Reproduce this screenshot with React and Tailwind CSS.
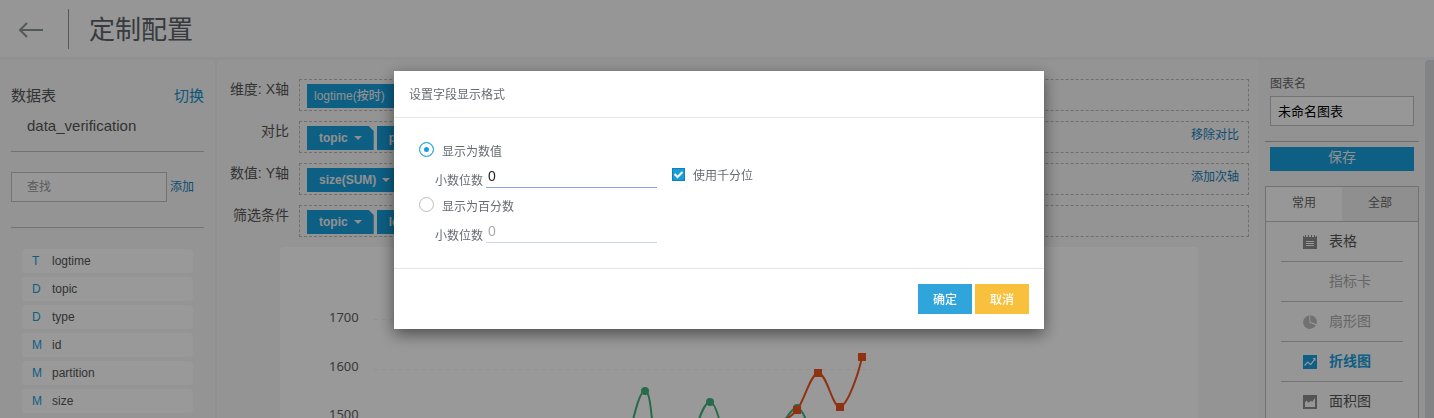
import React from "react";

const fields = [
  ["T", "logtime"],
  ["D", "topic"],
  ["D", "type"],
  ["M", "id"],
  ["M", "partition"],
  ["M", "size"],
];

const shelves = [
  { label: "维度: X轴", chips: [{ text: "logtime(按时)", plain: true }] },
  { label: "对比", chips: [{ text: "topic" }, { text: "partition" }], action: "移除对比" },
  { label: "数值: Y轴", chips: [{ text: "size(SUM)" }], action: "添加次轴" },
  { label: "筛选条件", chips: [{ text: "topic" }, { text: "logtime" }] },
];

function TableIcon() {
  return (
    <svg width="14" height="14" viewBox="0 0 14 14" aria-hidden="true">
      <path fill="#8c8c8c" d="M0 1h1v1h1V0h1v2h2V0h1v2h2V0h1v2h2V0h1v2h1V1h1v13H0z" />
      <path stroke="#fafafa" d="M3 6.500h8M3 8.500h8M3 10.500h8" />
    </svg>
  );
}

function PieIcon() {
  return (
    <svg width="14" height="14" viewBox="0 0 14 14" aria-hidden="true">
      <path fill="#bcbcbc" d="M6.300 .5V7.700l6.500 2.600A6.700 6.700 0 1 1 6.300 .5z" />
      <path fill="#bcbcbc" d="M7.300 .2A6.700 6.700 0 0 1 13.600 8.900L7.300 6.900z" />
    </svg>
  );
}

function LineIcon() {
  return (
    <svg width="14" height="14" viewBox="0 0 14 14" aria-hidden="true">
      <path fill="#169edb" d="M0 0h14v14H0z" />
      <path fill="none" stroke="#fafafa" strokeWidth="1.2" d="M1.500 10.500 4.800 7l2.800 2.600 4.200-5.400" />
      <path fill="#fafafa" d="M9.500 3h3v3.200z" />
    </svg>
  );
}

function AreaIcon() {
  return (
    <svg width="14" height="14" viewBox="0 0 14 14" aria-hidden="true">
      <path fill="#8c8c8c" d="M0 0h14v14H0z" />
      <path fill="#fafafa" d="M2 12V7.500L3.500 5.500l2 2.200L8 5.500l1 1.500L12 3v9z" />
    </svg>
  );
}

const chartTypes = [
  { name: "表格", icon: <TableIcon />, tone: "text-[#555]" },
  { name: "指标卡", icon: null, tone: "text-[#aaa]" },
  { name: "扇形图", icon: <PieIcon />, tone: "text-[#aaa]" },
  { name: "折线图", icon: <LineIcon />, tone: "font-bold text-[#169edb]" },
  { name: "面积图", icon: <AreaIcon />, tone: "text-[#555]" },
];

function Chip({ text, plain }) {
  return (
    <button
      type="button"
      className={
        "flex h-6 items-center bg-[#169edb] text-xs text-[#f0f0f0] " +
        (plain
          ? "gap-3 px-[7px] font-medium"
          : "gap-1.5 px-3 font-bold [clip-path:polygon(0_0,calc(100%-5px)_0,100%_5px,100%_100%,0_100%)]")
      }
    >
      {text}
      <svg width="8" height="4" viewBox="0 0 8 4" aria-hidden="true">
        <path fill="currentColor" d="M0 0h8L4 4z" />
      </svg>
    </button>
  );
}

function Header() {
  return (
    <header className="flex h-[60px] shrink-0 items-center border-b-3 border-[#eef1f4] bg-[#fafafa] pl-[18px]">
      <a href="#back" aria-label="返回">
        <svg width="26" height="18" viewBox="0 0 26 18" fill="none" stroke="#8b9494" strokeWidth="2" aria-hidden="true">
          <path d="M25 10H2M9 3 2 10l7 7" />
        </svg>
      </a>
      <div className="ml-6 h-10 w-px bg-[#8b9494]" />
      <h1 className="ml-5 pt-0.5 text-[26px] leading-10 text-[#5c6268]">定制配置</h1>
    </header>
  );
}

function FieldPanel() {
  return (
    <aside className="w-[217px] shrink-0 border-r-2 border-[#eef1f4] bg-[#f7f7f7] pr-[11px] pl-[11px] pt-6">
      <div className="flex items-center justify-between text-[15px] leading-6">
        <h2 className="text-[#555]">数据表</h2>
        <a href="#switch" className="text-[#1690cc]">切换</a>
      </div>
      <p className="mt-[5px] border-b border-[#c0c0c0] pb-3 pl-4 text-[15px] leading-[26px] text-[#555]">data_verification</p>
      <div className="mt-5 flex items-center gap-[3px] border-b border-[#c0c0c0] pb-[25px]">
        <input
          aria-label="查找"
          placeholder="查找"
          className="h-[30px] w-[156px] border border-[#c0c0c0] bg-[#fcfcfc] px-[15px] text-xs placeholder:text-[#999]"
        />
        <a href="#add" className="text-xs text-[#1680bb]">添加</a>
      </div>
      <ul className="mx-[11px] mt-[21px] flex flex-col gap-1 text-xs text-[#555]">
        {fields.map(([kind, name]) => (
          <li key={name} className="flex h-6 items-center rounded bg-white pb-px pl-[10px]">
            <span className="w-5 text-[#169edb]">{kind}</span>
            {name}
          </li>
        ))}
      </ul>
    </aside>
  );
}

function Chart() {
  return (
    <div className="mt-2.5 mr-[60px] ml-[63px] overflow-hidden rounded-sm bg-white">
      <svg width="918" height="280" viewBox="280 247 918 280" role="img" aria-label="折线图">
        <g stroke="#f4f4f4" strokeDasharray="4 4">
          <path d="M374 319.500H873M374 369.500H873M374 418.500H873" />
        </g>
        <g fill="#606060" fontSize="13" fontFamily="'Noto Sans', sans-serif">
          <text x="329" y="322">1700</text>
          <text x="329" y="371">1600</text>
          <text x="329" y="419">1500</text>
        </g>
        <g fill="none" stroke="#3fb27f" strokeWidth="2">
          <path d="M628 440C636 407 640 391 645 391S651 410 654 440M692 440C700 414 705 402 710 402S720 420 724 440M775 440C786 416 792 408 797 408S808 422 812 440" />
        </g>
        <g fill="#3fb27f">
          <circle cx="645" cy="391" r="4" />
          <circle cx="710" cy="402" r="4" />
          <circle cx="797" cy="408" r="4" />
        </g>
        <path fill="none" stroke="#f0541e" strokeWidth="2" d="M775 430C784 420 791 417 797 410C805 399 810 375 818 373C827 373 832 407 840 407C848 405 859 372 862 357" />
        <path fill="#f0541e" d="M793 406h8v8h-8zM814 369h8v8h-8zM836 403h8v8h-8zM858 353h8v8h-8z" />
      </svg>
    </div>
  );
}

function Workspace() {
  return (
    <main className="min-w-0 flex-1 bg-[#f7f7f7] pt-[19px]">
      <div className="flex flex-col gap-2.5 pr-[9px]">
        {shelves.map((shelf) => (
          <section key={shelf.label} className="flex gap-2.5">
            <h3 className="w-[72px] shrink-0 text-right text-sm leading-5 text-[#555]">{shelf.label}</h3>
            <div className="flex h-8 flex-1 items-center gap-[3px] border border-dashed border-[#bbb] px-[7px] pt-0.5">
              {shelf.chips.map((chip) => (
                <Chip key={chip.text} {...chip} />
              ))}
              {shelf.action && (
                <a href="#shelf" className="mr-0.5 mb-1.5 ml-auto text-xs text-[#1680bb]">{shelf.action}</a>
              )}
            </div>
          </section>
        ))}
      </div>
      <Chart />
    </main>
  );
}

function ChartPanel() {
  return (
    <aside className="w-[167px] shrink-0 bg-[#f3f3f3] pt-4 pr-1.5 pl-[7px] text-xs">
      <div className="px-[5px]">
        <label htmlFor="chart-name" className="block leading-4 text-[#666]">图表名</label>
        <input
          id="chart-name"
          defaultValue="未命名图表"
          className="mt-1 h-[30px] w-full border border-[#c0c0c0] bg-[#fcfcfc] px-[7px] pb-0.5 text-[13px] text-black"
        />
      </div>
      <hr className="mt-[15px] border-[#b5b5b5]" />
      <div className="px-[5px]">
        <button type="button" className="mt-[5px] h-6 w-full bg-[#169edb] pb-1 text-sm leading-5 text-[#f0f0f0]">保存</button>
      </div>
      <div className="mt-[15px] border border-[#bfbfbf] bg-[#fafafa]">
        <div className="flex h-[35px] border-b border-[#bfbfbf] text-[#666]">
          <button type="button" className="flex-1 bg-[#fcfcfc] pb-0.5">常用</button>
          <button type="button" className="flex-1 bg-[#efefef] pb-0.5">全部</button>
        </div>
        <ul className="px-[15px] text-sm">
          {chartTypes.map((type) => (
            <li key={type.name} className="border-b border-[#bfbfbf]">
              <button type="button" className={"flex h-[39px] w-full items-center pb-0.5 pl-[22px] " + type.tone}>
                <span className="mt-0.5 w-[26px]">{type.icon}</span>
                {type.name}
              </button>
            </li>
          ))}
        </ul>
      </div>
    </aside>
  );
}

function FormatOption({ id, label, checked, disabled, children }) {
  return (
    <div className="h-[55px]">
      <div className="flex h-[23px] items-center gap-2">
        <input
          type="radio"
          name="format"
          id={id}
          defaultChecked={checked}
          className="mb-1 size-[15px] appearance-none rounded-full border border-[#bbb] bg-white checked:border-[#2ba6de] checked:bg-[#169edb] checked:shadow-[inset_0_0_0_4px_white]"
        />
        <label htmlFor={id}>{label}</label>
      </div>
      <div className="flex h-[26px] items-start pl-4">
        <label htmlFor={id + "-digits"} className="pt-[9px] leading-[18px]">小数位数</label>
        <input
          id={id + "-digits"}
          defaultValue="0"
          disabled={disabled}
          className="ml-[3px] h-[25px] w-[171px] border-b border-[#8aa4e0] px-0.5 pt-0.5 text-sm text-[#222] disabled:border-[#ccd4e8] disabled:text-[#aaa]"
        />
        {children}
      </div>
    </div>
  );
}

function FormatDialog() {
  return (
    <div className="fixed inset-0 flex items-start justify-center bg-black/40 pt-[71px] pl-1">
      <div role="dialog" aria-modal="true" aria-labelledby="dialog-title" className="w-[650px] bg-white text-xs text-[#666b72] shadow-[0_5px_15px_rgba(0,0,0,0.5)]">
        <h2 id="dialog-title" className="h-[47px] border-b border-[#e5e5e5] px-[15px] leading-[48px]">设置字段显示格式</h2>
        <div className="h-[150px] px-[25px] pt-[22px]">
          <FormatOption id="number" label="显示为数值" checked>
            <div className="ml-[15px] flex h-[22px] items-center gap-2">
              <span className="grid">
                <input
                  id="thousands"
                  type="checkbox"
                  defaultChecked
                  className="col-start-1 row-start-1 size-[13px] appearance-none border border-[#0f7fb5] bg-white checked:bg-[#169edb]"
                />
                <svg className="pointer-events-none col-start-1 row-start-1" width="13" height="13" viewBox="0 0 13 13" aria-hidden="true">
                  <path fill="none" stroke="#fff" strokeWidth="2" d="m2.500 6 3 3L10.500 4" />
                </svg>
              </span>
              <label htmlFor="thousands" className="pt-1 leading-4">使用千分位</label>
            </div>
          </FormatOption>
          <FormatOption id="percent" label="显示为百分数" disabled />
        </div>
        <div className="flex justify-end gap-[3px] border-t border-[#e5e5e5] p-[15px] font-medium text-white">
          <button type="button" className="h-[30px] w-[54px] bg-[#2fa5db] pt-0.5">确定</button>
          <button type="button" className="h-[30px] w-[54px] bg-[#f8c03c] pt-0.5">取消</button>
        </div>
      </div>
    </div>
  );
}

export default function App() {
  return (
    <div className="flex h-screen flex-col overflow-hidden bg-[#f7f7f7] font-['Liberation_Sans','Noto_Sans_CJK_SC',sans-serif]">
      <Header />
      <div className="flex min-h-0 flex-1">
        <FieldPanel />
        <Workspace />
        <ChartPanel />
        <div className="w-[9px] shrink-0 rounded-tl bg-[#d8dadc]" />
      </div>
      <FormatDialog />
    </div>
  );
}
